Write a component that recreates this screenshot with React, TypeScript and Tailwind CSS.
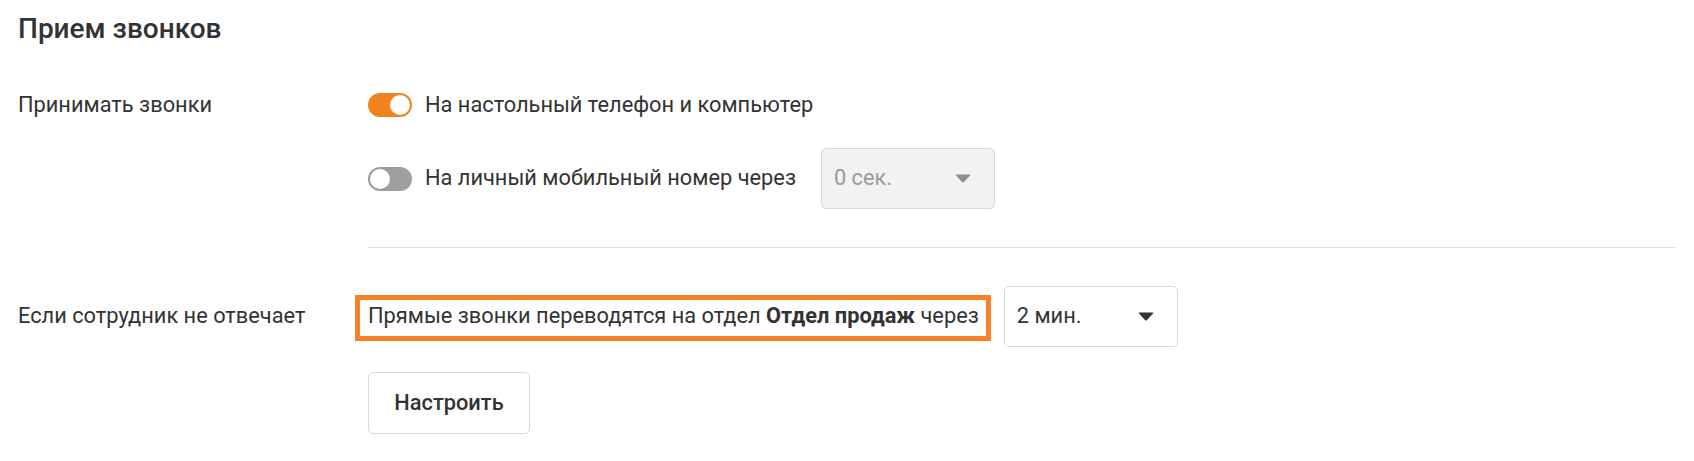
import React from "react";

function Toggle({ on }: { on: boolean }) {
  return (
    <div
      className={
        "relative h-[24px] w-[44px] shrink-0 rounded-full " +
        (on ? "bg-[#f0821f]" : "bg-[#9e9e9e]")
      }
    >
      <div
        className={
          "absolute top-[2px] h-[20px] w-[20px] rounded-full bg-white " +
          (on ? "right-[2px]" : "left-[2px]")
        }
      />
    </div>
  );
}

function Caret({ color }: { color: string }) {
  return (
    <svg width="16" height="9" viewBox="0 0 16 9" className="shrink-0">
      <path
        d="M1.5 0.5 H14.5 Q15.8 0.5 15 1.6 L9 8 Q8 9 7 8 L1 1.6 Q0.2 0.5 1.5 0.5 Z"
        fill={color}
      />
    </svg>
  );
}

function Select({ value, disabled }: { value: string; disabled?: boolean }) {
  return (
    <div
      className={
        "flex h-[61px] w-[174px] shrink-0 items-center justify-between rounded-[5px] border border-[#d9d9d9] pl-[12px] pr-[23px] " +
        (disabled ? "bg-[#f1f2f2] text-[#9a9a9a]" : "bg-white text-[#333333]")
      }
    >
      <span>{value}</span>
      <Caret color={disabled ? "#8c8c8c" : "#333333"} />
    </div>
  );
}

export default function App() {
  return (
    <div
      className="min-h-[461px] w-full bg-white pl-[18px] pr-[19px] pt-[12px] text-[21.8px] text-[#333333]"
      style={{ fontFamily: "Roboto, 'Noto Sans', sans-serif" }}
    >
      <h1 className="h-[34px] text-[28px] font-medium leading-[34px] text-[#333333]">
        Прием звонков
      </h1>

      <div className="mt-[29px] flex">
        <div className="flex h-[60px] w-[350px] shrink-0 items-center">
          Принимать звонки
        </div>
        <div className="flex flex-1 flex-col">
          <div className="flex h-[60px] items-center gap-[13px]">
            <Toggle on />
            <span>На настольный телефон и компьютер</span>
          </div>
          <div className="mt-[13px] flex h-[61px] items-center">
            <Toggle on={false} />
            <span className="ml-[13px]">На личный мобильный номер через</span>
            <div className="ml-[25px]">
              <Select value="0 сек." disabled />
            </div>
          </div>
          <div className="mt-[38px] h-px w-full bg-[#dcdcdc]" />
        </div>
      </div>

      <div className="mt-[38px] flex">
        <div className="flex h-[60px] w-[350px] shrink-0 items-center">
          Если сотрудник не отвечает
        </div>
        <div className="flex flex-1 flex-col">
          <div className="flex h-[60px] items-center">
            <span className="relative">
              Прямые звонки переводятся на отдел{" "}
              <b className="font-bold">Отдел продаж</b> через
              <span className="pointer-events-none absolute -bottom-[9px] -left-[13px] -right-[12px] -top-[5px] border-[5px] border-[#f7822a]" />
            </span>
            <div className="ml-[25px]">
              <Select value="2 мин." />
            </div>
          </div>
          <button className="mt-[26px] flex h-[62px] w-[162px] items-center justify-center rounded-[5px] border border-[#d9d9d9] bg-white font-medium text-[#333333]">
            Настроить
          </button>
        </div>
      </div>
    </div>
  );
}
